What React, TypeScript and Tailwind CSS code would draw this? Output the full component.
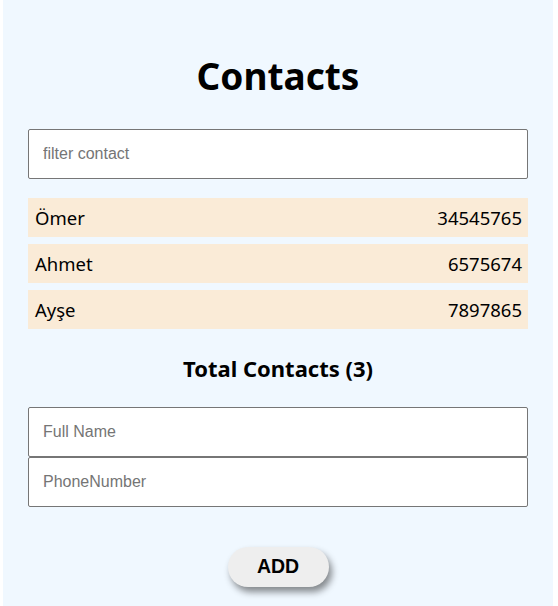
import React, { useState } from 'react';

const contacts = [
  { name: 'Ömer', phone: '34545765' },
  { name: 'Ahmet', phone: '6575674' },
  { name: 'Ayşe', phone: '7897865' },
];

const App = () => {
  const [filter, setFilter] = useState('');
  const [name, setName] = useState('');
  const [phone, setPhone] = useState('');

  const shown = contacts.filter((c) => c.name.toLowerCase().includes(filter.toLowerCase()));

  return (
    <div className="min-h-[606px] bg-white">
      <div className="ml-[3px] w-[550px] min-h-[606px] bg-[#f0f8ff] px-[25px] pt-[48px] font-['Noto_Sans',sans-serif]">
        <h1 className="text-center text-[37px] font-bold leading-[56px] text-black">Contacts</h1>

        {/* filter */}
        <input
          value={filter}
          onChange={(e) => setFilter(e.target.value)}
          placeholder="filter contact"
          className="mt-[25px] block h-[50px] w-full rounded-[2px] border border-[#767676] bg-white pl-[14px] font-['Liberation_Sans',Arial,sans-serif] text-[16px] outline-none placeholder:text-[#757575]"
        />

        <ul className="mt-[19px] flex flex-col gap-[7px]">
          {shown.map((c) => (
            <li key={c.name} className="flex h-[39px] items-center justify-between bg-[#faebd7] pl-[7px] pr-[6px] text-[18.5px] text-black">
              <span>{c.name}</span>
              <span>{c.phone}</span>
            </li>
          ))}
        </ul>

        <h3 className="mt-[22px] text-center text-[22px] font-bold leading-[34px] text-black">Total Contacts ({shown.length})</h3>

        <div className="mt-[22px]">
          <input
            value={name}
            onChange={(e) => setName(e.target.value)}
            placeholder="Full Name"
            className="block h-[50px] w-full rounded-[2px] border border-[#767676] bg-white pl-[14px] font-['Liberation_Sans',Arial,sans-serif] text-[16px] outline-none placeholder:text-[#757575]"
          />
          <input
            value={phone}
            onChange={(e) => setPhone(e.target.value)}
            placeholder="PhoneNumber"
            className="block h-[50px] w-full rounded-[2px] border border-[#767676] bg-white pl-[14px] font-['Liberation_Sans',Arial,sans-serif] text-[16px] outline-none placeholder:text-[#757575]"
          />
        </div>

        <div className="mt-[40px] flex justify-center">
          <button className="h-[40px] w-[101px] rounded-full bg-[#eeeeee] font-['Liberation_Sans',Arial,sans-serif] text-[19.5px] font-bold text-black shadow-[3px_5px_7px_rgba(0,0,0,0.45)]">
            ADD
          </button>
        </div>
      </div>
    </div>
  );
};

export default App;
